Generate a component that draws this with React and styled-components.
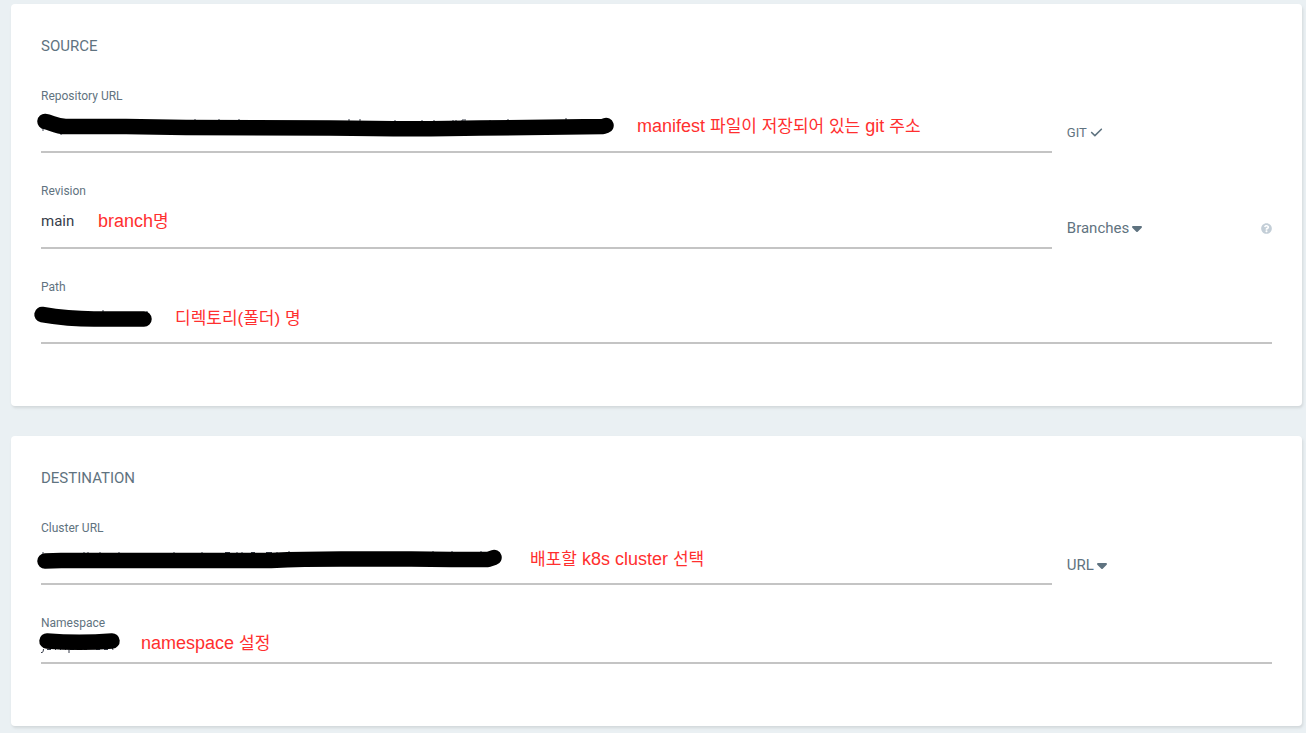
import styled, { createGlobalStyle } from "styled-components";
import { FaQuestionCircle } from "react-icons/fa";
import { FaCaretDown, FaCheck } from "react-icons/fa6";

const GlobalStyle = createGlobalStyle`
  * {
    box-sizing: border-box;
  }

  body {
    margin: 0;
    background-color: #eaf0f3;
    color: #5f7380;
    font-family: Roboto, "Noto Sans CJK KR", sans-serif;
    font-size: 15px;
  }
`;

const Page = styled.main`
  display: flex;
  flex-direction: column;
  gap: 30px;
  padding: 4px 4px 7px 11px;
`;

const Panel = styled.section`
  padding: 30px 30px 62px;
  background-color: #fff;
  border-radius: 4px;
  box-shadow: 1px 2px 3px rgba(0, 0, 0, 0.1);
`;

const PanelTitle = styled.h2`
  margin: 0 0 30px;
  font-size: 15px;
  font-weight: 400;
  line-height: 24px;
`;

const Rows = styled.div`
  display: flex;
  flex-direction: column;
  gap: 30px;
`;

const Row = styled.div`
  display: grid;
  grid-template-columns: 10fr 2fr;
`;

const Field = styled.div`
  padding-right: ${(props) => (props.$wide ? "0" : "15px")};
  grid-column: ${(props) => (props.$wide ? "1 / -1" : "auto")};
`;

const Label = styled.label`
  display: block;
  font-size: 12px;
  line-height: 16px;
`;

const InputBox = styled.div`
  position: relative;
`;

const Input = styled.input`
  display: block;
  width: 100%;
  height: ${(props) => props.$height}px;
  padding: 0 0 4px;
  border: 0;
  border-bottom: 2px solid #c4c4c4;
  border-radius: 0;
  outline: 0;
  background: transparent;
  color: #363c4a;
  font: inherit;
`;

const Marker = styled.svg`
  position: absolute;
  top: 0;
  left: 0;
  width: 1px;
  height: 1px;
  overflow: visible;
  pointer-events: none;
  fill: none;
  stroke: #000;
  stroke-linecap: round;
  stroke-linejoin: round;
`;

const Note = styled.span`
  position: absolute;
  left: ${(props) => props.$x}px;
  top: ${(props) => props.$y}px;
  color: #ff2f2f;
  font-family: "Liberation Sans", "Noto Sans CJK KR", sans-serif;
  font-size: 18px;
  line-height: 24px;
  white-space: nowrap;
  pointer-events: none;
`;

const Hangul = styled.span`
  font-size: 17px;
`;

const Side = styled.div`
  display: flex;
  align-items: center;
  justify-content: space-between;
  padding-top: 24px;
`;

const RepoType = styled.span`
  display: flex;
  align-items: center;
  gap: 3px;
  font-size: 13px;
  line-height: 20px;
`;

const SelectBox = styled.span`
  display: flex;
  align-items: center;
`;

const Select = styled.select`
  appearance: none;
  field-sizing: content;
  padding: 0;
  border: 0;
  background: transparent;
  color: inherit;
  font: inherit;
  line-height: 20px;
  cursor: pointer;
`;

const HelpButton = styled.button`
  display: flex;
  padding: 0;
  border: 0;
  background: transparent;
  color: #c3ced7;
  cursor: pointer;
`;

const TextField = ({ id, label, value = "", height = 49, wide, note, x, y, children }) => (
  <Field $wide={wide}>
    <Label htmlFor={id}>{label}</Label>
    <InputBox>
      <Input id={id} type="text" defaultValue={value} $height={height} />
      {children}
      <Note $x={x} $y={y}>
        {note}
      </Note>
    </InputBox>
  </Field>
);

// thick pen stroke over a hidden value, with the bits of text that stick out
const Scribble = ({ stroke, bits }) => (
  <Marker aria-hidden="true">
    <path d={bits} strokeWidth="1" strokeLinecap="butt" stroke="#363c4a" />
    <path d={stroke} strokeWidth="15.5" />
  </Marker>
);

const Dropdown = ({ label, options }) => (
  <SelectBox>
    <Select aria-label={label}>
      {options.map((option) => (
        <option key={option}>{option}</option>
      ))}
    </Select>
    <FaCaretDown size={16} />
  </SelectBox>
);

const App = () => {
  return (
    <>
      <GlobalStyle />
      <Page>
        <Panel>
          <PanelTitle>SOURCE</PanelTitle>
          <Rows>
            <Row>
              <TextField
                id="repo"
                label="Repository URL"
                note={
                  <>
                    manifest <Hangul>파일이 저장되어 있는</Hangul> git <Hangul>주소</Hangul>
                  </>
                }
                x={596}
                y={10}
              >
                <Scribble
                  stroke="M4 17.5C10 18 14 22.5 25 22.5L85 22.5L145 23.5L289 24Q379 25.5 439 24L562 22.5L565 21.5"
                  bits="M2 22V27M20 24V31M154 15V20M178 15V20M198 15V20M308 15V20M319 15V20M354 16V20M381 16V20M393 16V20M412 16V20M415 16V20M421 20V16H425M449 16V20M467 15V20M525 14V20"
                />
              </TextField>
              <Side>
                <RepoType>
                  GIT <FaCheck size={13} />
                </RepoType>
              </Side>
            </Row>
            <Row>
              <TextField
                id="revision"
                label="Revision"
                value="main"
                height={50}
                note={
                  <>
                    branch<Hangul>명</Hangul>
                  </>
                }
                x={57}
                y={10}
              />
              <Side>
                <Dropdown label="Revision type" options={["Branches", "Tags"]} />
                <HelpButton type="button" aria-label="Help">
                  <FaQuestionCircle size={11} />
                </HelpButton>
              </Side>
            </Row>
            <Row>
              <TextField
                id="path"
                label="Path"
                wide
                note={<Hangul>디렉토리(폴더) 명</Hangul>}
                x={134}
                y={11}
              >
                <Scribble stroke="M1 19.5Q27 24 53 24L103 24" bits="M62 15V20M106 16V20" />
              </TextField>
            </Row>
          </Rows>
        </Panel>
        <Panel>
          <PanelTitle>DESTINATION</PanelTitle>
          <Rows>
            <Row>
              <TextField
                id="cluster"
                label="Cluster URL"
                note={
                  <>
                    <Hangul>배포할</Hangul> k8s cluster <Hangul>선택</Hangul>
                  </>
                }
                x={489}
                y={11}
              >
                <Scribble
                  stroke="M4 25L20 24.5L230 24.5Q262 23 300 23L370 23L410 23.5L447 23.5L453 21.5"
                  bits="M2 16V20M43 16V20M47 16V20M59 16V20M78 16V20M133 16V20M161 16V20M184 16.5H189M196 16V20M201 16V20M210 16.5H214M225 16.5H231M236 16V20M248 15V20M392 15V20M411 15V20M440 15V20"
                />
              </TextField>
              <Side>
                <Dropdown label="Cluster field" options={["URL", "NAME"]} />
              </Side>
            </Row>
            <Row>
              <TextField
                id="namespace"
                label="Namespace"
                height={33}
                wide
                note={
                  <>
                    namespace <Hangul>설정</Hangul>
                  </>
                }
                x={100}
                y={0}
              >
                <Scribble
                  stroke="M6 10Q38 12.5 71 10"
                  bits="M0 21.5H1Q2.5 21.5 2.5 18M6 18.5H10M14.5 16V19M19.5 16V19M24.5 16V19M28 16V22M29 18.5H33M43 18.5H46M55 18.5H59M63 18.5H67M71 16L72 19"
                />
              </TextField>
            </Row>
          </Rows>
        </Panel>
      </Page>
    </>
  );
};

export default App;
